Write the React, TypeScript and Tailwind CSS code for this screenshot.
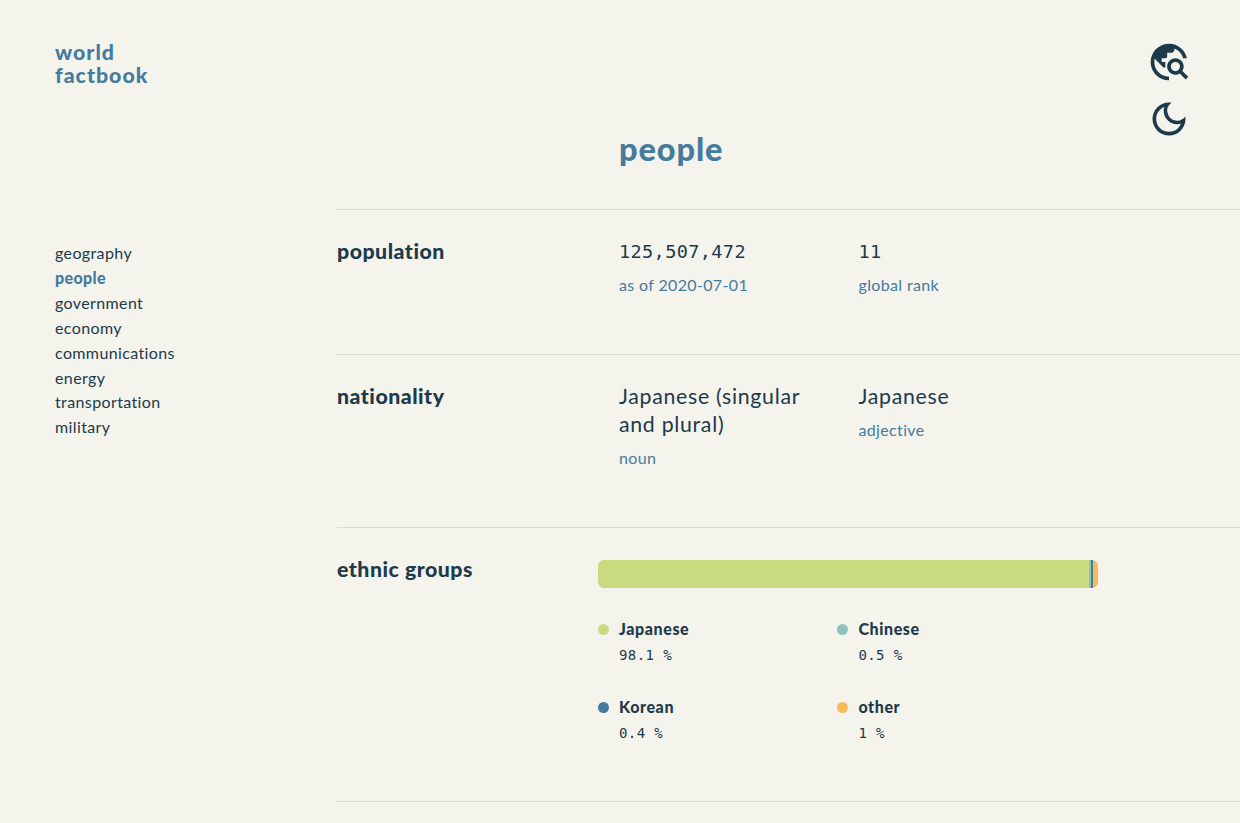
import type { ReactNode } from 'react'
import { MdOutlineDarkMode, MdTravelExplore } from 'react-icons/md'

const sections = [
  'geography',
  'people',
  'government',
  'economy',
  'communications',
  'energy',
  'transportation',
  'military',
]

const ethnicGroups = [
  { name: 'Japanese', percent: 98.1, color: 'bg-[#c8db7f]' },
  { name: 'Chinese', percent: 0.5, color: 'bg-[#8fc1bf]' },
  { name: 'Korean', percent: 0.4, color: 'bg-[#457b9d]' },
  { name: 'other', percent: 1, color: 'bg-[#f7b95b]' },
]

function Row({ title, height, children }: { title: string; height: string; children: ReactNode }) {
  return (
    <section className={`flex border-t border-[#dadad6] pt-[27px] ${height}`}>
      <h2 className="w-[261px] shrink-0 text-[21.3px] leading-7 font-black tracking-[0.5px]">
        {title}
      </h2>
      {children}
    </section>
  )
}

function Fact({ value, label, mono }: { value: string; label: string; mono?: boolean }) {
  return (
    <div className="w-[239.5px] pr-8 pl-[21px]">
      <p
        className={
          mono
            ? 'pt-px font-["DejaVu_Sans_Mono",monospace] text-[18.5px] leading-7 tracking-[0.4px]'
            : 'text-[21.3px] leading-7 tracking-[0.7px]'
        }
      >
        {value}
      </p>
      <p
        className={`text-base leading-6 tracking-[0.35px] text-[#457b9d] ${mono ? 'mt-[7px]' : 'mt-2'}`}
      >
        {label}
      </p>
    </div>
  )
}

export default function App() {
  return (
    <div className='flex h-[823px] overflow-hidden bg-[#f4f3ec] font-["Lato",sans-serif] text-[#1d3a4b] [font-variant-ligatures:none]'>
      <aside className="w-[337px] shrink-0 pt-[41px] pl-[55px]">
        <div className="text-[21.3px] leading-[23px] font-black tracking-[1px] text-[#457b9d]">
          world
          <br />
          factbook
        </div>

        <nav className="mt-[154px] flex flex-col text-base leading-[24.9px] tracking-[0.38px]">
          {sections.map((section) => (
            <a key={section} className={section === 'people' ? 'font-black text-[#457b9d]' : ''}>
              {section}
            </a>
          ))}
        </nav>
      </aside>

      <main className="flex-1">
        <header className="flex h-[208.5px] justify-between pr-[49px] pl-[282px]">
          <h1 className="pt-[129px] text-[32.5px] leading-10 font-black tracking-[0.9px] text-[#457b9d]">
            people
          </h1>
          <div className="flex flex-col gap-[13px] pt-10">
            <MdTravelExplore size={44} />
            <MdOutlineDarkMode size={44} />
          </div>
        </header>

        <Row title="population" height="h-[145.5px]">
          <Fact value="125,507,472" label="as of 2020-07-01" mono />
          <Fact value="11" label="global rank" mono />
        </Row>

        <Row title="nationality" height="h-[173px]">
          <Fact value="Japanese (singular and plural)" label="noun" />
          <Fact value="Japanese" label="adjective" />
        </Row>

        <Row title="ethnic groups" height="h-[274px]">
          <div className="w-[500px] pt-[5px]">
            <div className="flex h-7 overflow-hidden rounded-md">
              {ethnicGroups.map((group) => (
                <div key={group.name} className={group.color} style={{ width: `${group.percent}%` }} />
              ))}
            </div>

            <ul className="mt-7 grid grid-cols-[239.4px_239.4px] gap-y-[27px]">
              {ethnicGroups.map((group) => (
                <li key={group.name} className="flex gap-2.5">
                  <span className={`mt-2 size-[11px] rounded-full ${group.color}`} />
                  <div>
                    <h3 className="text-base leading-[25px] font-black tracking-[0.6px]">
                      {group.name}
                    </h3>
                    <p className='-mb-px pt-px font-["DejaVu_Sans_Mono",monospace] text-[14px] leading-[26px] tracking-[0.4px]'>
                      {group.percent} %
                    </p>
                  </div>
                </li>
              ))}
            </ul>
          </div>
        </Row>

        <div className="border-t border-[#dadad6]" />
      </main>
    </div>
  )
}
